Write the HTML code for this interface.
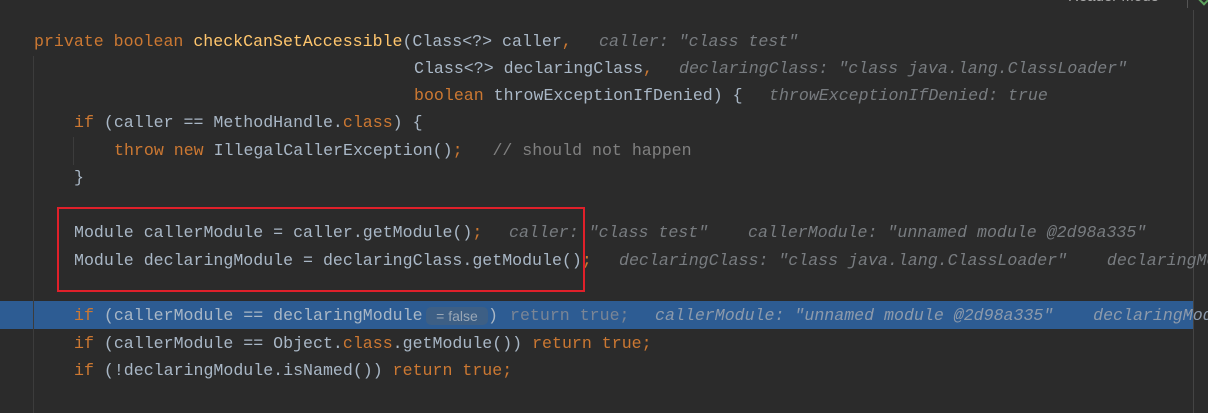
<!DOCTYPE html><html><head><style>
body{margin:0;width:1208px;height:413px;background:#2b2b2b;overflow:hidden;position:relative;font-family:"Liberation Mono",monospace;font-size:16.6px}
.l{position:absolute;left:0;white-space:pre;color:#a9b7c6;height:27px;line-height:27px}
.k{color:#cc7832}.m{color:#ffc66d}.c{color:#808080}
.h{position:absolute;white-space:pre;color:#787c80;font-style:italic;line-height:27px}
</style></head><body>
<div style="position:absolute;left:0;top:301px;width:1193px;height:28px;background:#2d5c93"></div>
<div style="position:absolute;left:33px;top:56px;width:1px;height:357px;background:#3c3c3c"></div>
<div style="position:absolute;left:73px;top:137px;width:1px;height:28px;background:#3c3c3c"></div>
<div style="position:absolute;left:1193px;top:10px;width:1px;height:403px;background:#444"></div>
<div style="position:absolute;left:1068px;top:-12px;color:#aaa;font-family:'Liberation Sans',sans-serif;font-size:15px">Reader Mode</div>
<div style="position:absolute;left:1187px;top:0;width:1px;height:8px;background:#555"></div>
<div style="position:absolute;left:1200px;top:-4px;width:6px;height:6px;border-right:2px solid #5fa35f;border-bottom:2px solid #5fa35f;transform:rotate(45deg)"></div>

<div class="l" style="top:28px;left:34px"><span class="k">private boolean </span><span class="m">checkCanSetAccessible</span>(Class&lt;?&gt; caller<span class="k">,</span></div>
<div class="h" style="top:28px;left:599px">caller: "class test"</div>
<div class="l" style="top:55px;left:414px">Class&lt;?&gt; declaringClass<span class="k">,</span></div>
<div class="h" style="top:55px;left:679px">declaringClass: "class java.lang.ClassLoader"</div>
<div class="l" style="top:82px;left:414px"><span class="k">boolean </span>throwExceptionIfDenied) {</div>
<div class="h" style="top:82px;left:769px">throwExceptionIfDenied: true</div>
<div class="l" style="top:109px;left:74px"><span class="k">if </span>(caller == MethodHandle.<span class="k">class</span>) {</div>
<div class="l" style="top:137px;left:114px"><span class="k">throw new </span>IllegalCallerException()<span class="k">;</span>   <span class="c">// should not happen</span></div>
<div class="l" style="top:164px;left:74px">}</div>
<div class="l" style="top:219px;left:74px">Module callerModule = caller.getModule()<span class="k">;</span></div>
<div class="h" style="top:219px;left:509px">caller: "class test"    callerModule: "unnamed module @2d98a335"</div>
<div class="l" style="top:247px;left:74px">Module declaringModule = declaringClass.getModule()<span class="k">;</span></div>
<div class="h" style="top:247px;left:619px">declaringClass: "class java.lang.ClassLoader"    declaringModule</div>
<div style="position:absolute;left:57px;top:207px;width:524px;height:81px;border:2px solid #e0202a"></div>
<div class="l" style="top:302px;left:74px"><span class="k">if </span>(callerModule == declaringModule</div>
<div style="position:absolute;left:426px;top:307px;width:62px;height:18px;background:#3d5f85;border-radius:5px;color:#9aa7b5;font-family:'Liberation Sans',sans-serif;font-size:14px;line-height:18px;text-align:center">= false</div>
<div class="l" style="top:302px;left:488px">)</div>
<div class="h" style="top:302px;left:510px;font-style:normal;color:#7a8595">return true;</div>
<div class="h" style="top:302px;left:655px;color:#8d9aab">callerModule: "unnamed module @2d98a335"    declaringModule</div>
<div class="l" style="top:330px;left:74px"><span class="k">if </span>(callerModule == Object.<span class="k">class</span>.getModule()) <span class="k">return true;</span></div>
<div class="l" style="top:357px;left:74px"><span class="k">if </span>(!declaringModule.isNamed()) <span class="k">return true;</span></div>
</body></html>
